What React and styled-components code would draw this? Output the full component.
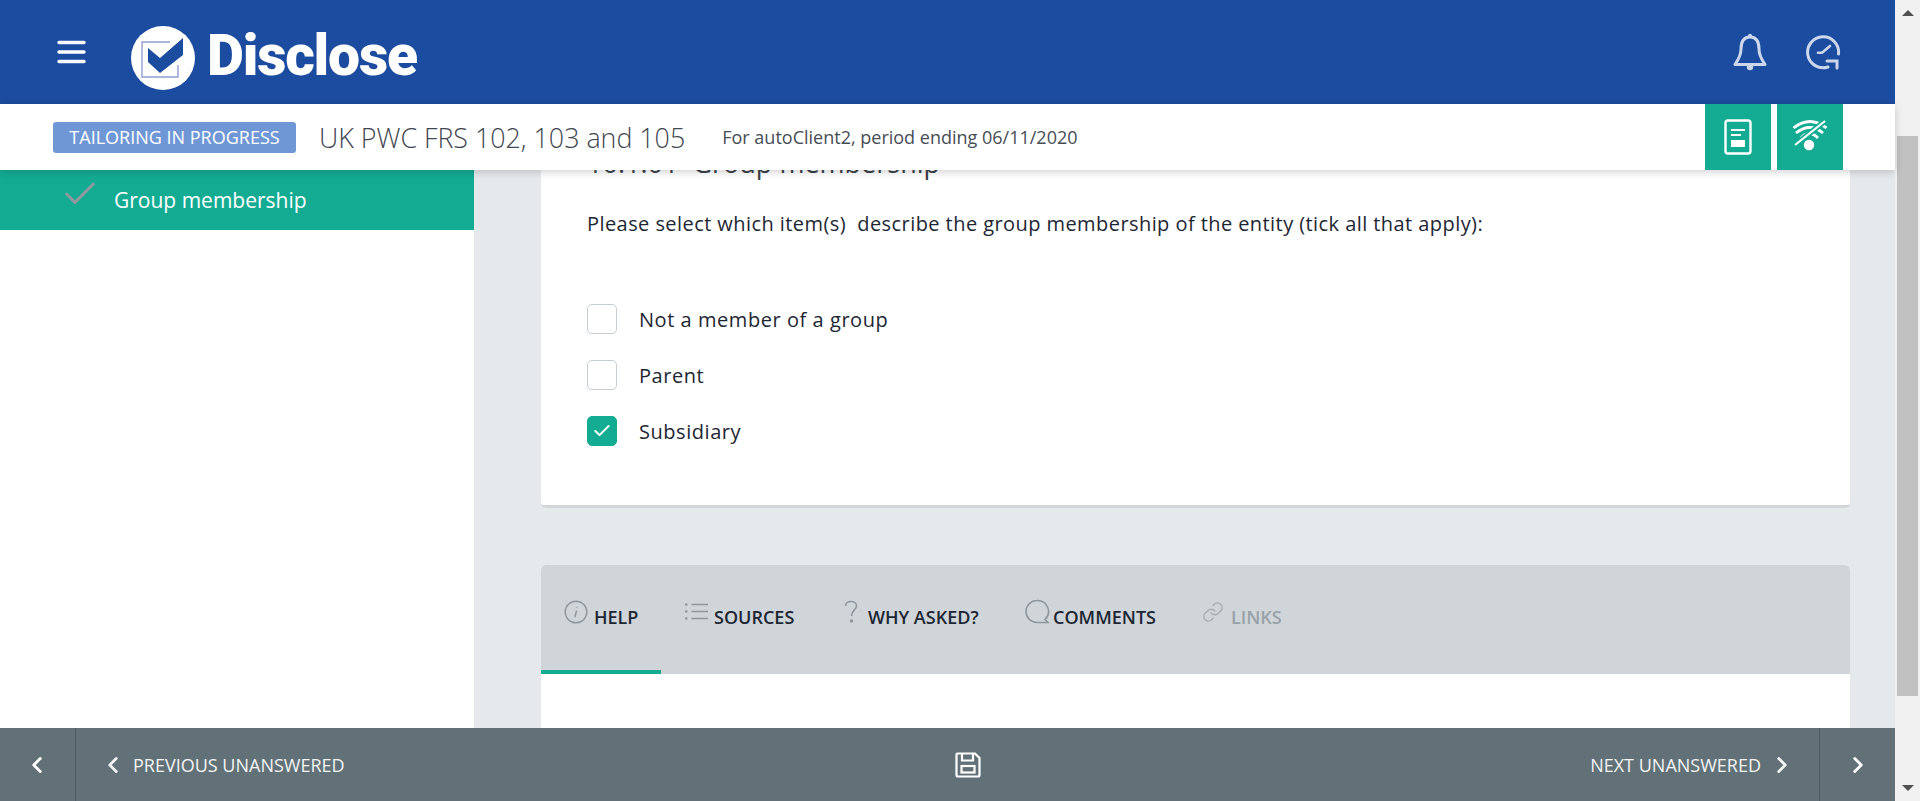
import React from "react";
import styled, { createGlobalStyle } from "styled-components";
import { ChevronLeft, ChevronRight, Check, Link } from "lucide-react";

const GlobalStyle = createGlobalStyle`
  html, body { margin: 0; height: 100%; overflow: hidden; }
  body { font-family: "Open Sans", sans-serif; color: #1d2733; }
  * { box-sizing: border-box; }
`;

const Page = styled.div`
  display: flex;
  height: 100vh;
  width: 100%;
`;

const Frame = styled.div`
  flex: 1;
  min-width: 0;
  display: flex;
  flex-direction: column;
`;

const ScrollBar = styled.div`
  width: 25px;
  background: #f1f1f1;
  display: flex;
  flex-direction: column;
  align-items: center;
`;

const ScrollArrow = styled.div`
  width: 0;
  height: 0;
  margin: ${(p) => (p.$down ? "auto 0 10px" : "10px 0 0")};
  border-left: 6px solid transparent;
  border-right: 6px solid transparent;
  ${(p) => (p.$down ? "border-top: 6px solid #505050;" : "border-bottom: 6px solid #505050;")}
`;

const ScrollThumb = styled.div`
  width: 21px;
  height: 560px;
  margin-top: 120px;
  background: #c1c1c1;
`;

const TopBar = styled.header`
  height: 104px;
  flex: none;
  background: #1c4c9f;
  display: flex;
  align-items: center;
  padding: 0 52px;
`;

const Burger = styled.button`
  border: 0;
  background: none;
  padding: 0;
  color: #fff;
  display: flex;
  margin-right: 41px;
`;

const Logo = styled.div`
  display: flex;
  align-items: center;
  gap: 12px;
  margin-top: 12px;
`;

const LogoName = styled.span`
  font-family: Roboto, sans-serif;
  font-weight: 900;
  font-size: 57px;
  letter-spacing: -1.2px;
  color: #fff;
  line-height: 1;
  margin-top: -6px;
`;

const TopIcons = styled.div`
  margin-left: auto;
  display: flex;
  align-items: center;
  gap: 38px;
  color: #ccd6ec;
  margin-right: 2px;
`;

const SubBar = styled.div`
  height: 66px;
  flex: none;
  background: #fff;
  display: flex;
  align-items: center;
  padding: 0 0 0 53px;
  position: relative;
  z-index: 2;
  box-shadow: 0 2px 8px rgba(0, 0, 0, 0.18);
`;

const StatusTag = styled.span`
  width: 243px;
  height: 31px;
  border-radius: 3px;
  background: #6f97d6;
  color: #fff;
  font-size: 18px;
  display: flex;
  align-items: center;
  justify-content: center;
`;

const DocTitle = styled.span`
  margin-left: 23px;
  font-size: 26.8px;
  font-weight: 300;
  color: #3f4750;
`;

const DocMeta = styled.span`
  margin-left: 37px;
  font-size: 18px;
  color: #454d55;
`;

const SubActions = styled.div`
  margin-left: auto;
  margin-right: 52px;
  display: flex;
  gap: 6px;
  height: 100%;
`;

const SquareButton = styled.button`
  width: 66px;
  border: 0;
  padding: 0;
  background: #14ab93;
  color: #fff;
  display: flex;
  align-items: center;
  justify-content: center;
`;

const Body = styled.div`
  flex: 1;
  min-height: 0;
  display: flex;
`;

const Sidebar = styled.aside`
  width: 474px;
  flex: none;
  background: #fff;
`;

const NavItem = styled.div`
  height: 60px;
  background: #14ab93;
  color: #fff;
  font-size: 21px;
  line-height: 62px;
  display: flex;
  align-items: center;
  padding-left: 60px;
  gap: 14px;
`;

const NavCheck = styled(Check)`
  color: #8f9aa0;
  margin-top: -12px;
`;

const Main = styled.main`
  flex: 1;
  min-width: 0;
  overflow: hidden;
  background: #e5e9ec;
  padding: 0 45px 0 67px;
`;

const Card = styled.section`
  margin-top: -48px;
  height: 386px;
  background: #fff;
  border-radius: 5px;
  border-bottom: 3px solid #d2d6da;
  padding: 24px 46px;
`;

const CardTitle = styled.h2`
  margin: 0;
  height: 34px;
  font-size: 27px;
  font-weight: 400;
  line-height: 34px;
  color: #3a424a;
`;

const Prompt = styled.p`
  margin: 31px 0 68px;
  font-size: 20px;
  letter-spacing: 0.43px;
  line-height: 25px;
`;

const Options = styled.div`
  display: flex;
  flex-direction: column;
  gap: 26px;
`;

const Option = styled.label`
  display: flex;
  align-items: center;
  gap: 22px;
  font-size: 20px;
  letter-spacing: 0.55px;
`;

const Tick = styled.span`
  width: 30px;
  height: 30px;
  border-radius: 5px;
  border: 1px solid ${(p) => (p.$on ? "#14ab93" : "#c5ccd2")};
  background: ${(p) => (p.$on ? "#14ab93" : "#fff")};
  color: #fff;
  display: flex;
  align-items: center;
  justify-content: center;
`;

const TabPanel = styled.section`
  margin-top: 57px;
  background: #fff;
  border-radius: 5px 5px 0 0;
  height: 300px;
  overflow: hidden;
`;

const TabBar = styled.nav`
  height: 109px;
  background: #d0d5d9;
  display: flex;
`;

const Tab = styled.div`
  height: 100%;
  width: ${(p) => p.$w}px;
  padding: 31px 0 0 ${(p) => p.$pad}px;
  display: flex;
  align-items: flex-start;
  gap: ${(p) => p.$gap || 6}px;
  font-size: 18px;
  font-weight: 600;
  line-height: 42px;
  color: ${(p) => (p.$off ? "#9aa2a9" : "#1d2733")};
  border-bottom: 4px solid ${(p) => (p.$active ? "#14ab93" : "transparent")};
`;

const TabIcon = styled.span`
  display: flex;
  color: #8e979e;
  opacity: ${(p) => (p.$off ? 0.6 : 1)};
  margin-top: ${(p) => p.$top || 0}px;
`;

const Footer = styled.footer`
  height: 73px;
  flex: none;
  background: #627177;
  color: #fff;
  display: flex;
  align-items: center;
  font-size: 18px;
`;

const EdgeButton = styled.div`
  width: 76px;
  height: 100%;
  flex: none;
  display: flex;
  align-items: center;
  justify-content: center;
  ${(p) => (p.$right ? "border-left" : "border-right")}: 1px solid #4f5d63;
  ${(p) => (p.$right ? "" : "padding-right: 2px;")}
`;

const StepButton = styled.div`
  display: flex;
  align-items: center;
  gap: 12px;
  color: #f2f4f5;
  ${(p) => (p.$right ? "padding-right: 24px;" : "padding-left: 24px;")}
`;

const PrevChevron = styled(ChevronLeft)`
  margin-right: -5px;
`;

const NextChevron = styled(ChevronRight)`
  margin-left: -4px;
`;

const FooterMiddle = styled.div`
  flex: 1;
  display: flex;
  justify-content: center;
  padding-left: 40px;
`;

const SideWrap = styled.div`
  width: 385px;
  display: flex;
  justify-content: ${(p) => (p.$right ? "flex-end" : "flex-start")};
`;

function BurgerIcon() {
  return (
    <svg width="38" height="38" viewBox="0 0 38 38" fill="none" stroke="currentColor" strokeWidth="3.4" strokeLinecap="round">
      <path d="M7 9.500h25M7 19h25M7 28.500h25" />
    </svg>
  );
}

function LogoMark() {
  return (
    <svg width="64" height="64" viewBox="0 0 64 64">
      <circle cx="32" cy="32" r="32" fill="#fff" />
      <path d="M39 16H11v35h36V39" fill="none" stroke="#8f9fd0" strokeWidth="1.4" />
      <path d="M17 22l12 10 23-20v17L29 47 17 36z" fill="#1c4c9f" />
    </svg>
  );
}

function BellIcon() {
  return (
    <svg width="34" height="38" viewBox="0 0 34 38" fill="none" stroke="currentColor" strokeWidth="3" strokeLinejoin="round">
      <path d="M17 4C9.500 4 8 10 8 16c0 7-3 11-6 15.500h30C29 27 26 23 26 16c0-6-1.500-12-9-12z" />
      <circle cx="17" cy="2.800" r="2" fill="currentColor" stroke="none" />
      <circle cx="17" cy="34" r="3.200" fill="currentColor" stroke="none" />
    </svg>
  );
}

function ClockIcon() {
  return (
    <svg width="36" height="36" viewBox="0 0 36 36" fill="none" stroke="currentColor" strokeWidth="3" strokeLinecap="round">
      <path d="M33.500 20A15.500 15.500 0 1 0 23 33" />
      <path d="M17 18.700L25 12M17 18.700h-4" strokeWidth="2.600" />
      <path d="M22 27h10v7" />
    </svg>
  );
}

function ReportIcon() {
  return (
    <svg width="28" height="36" viewBox="0 0 28 36" fill="none">
      <rect x="1.500" y="1.500" width="25" height="33" rx="2.500" stroke="#fff" strokeWidth="2.400" />
      <path d="M7 11h14M7 16h10" stroke="#fff" strokeWidth="2" />
      <rect x="7" y="21" width="14" height="7" fill="#fff" />
    </svg>
  );
}

function WifiOffIcon() {
  return (
    <svg width="36" height="36" viewBox="0 0 36 36" fill="none" stroke="#fff" strokeWidth="2.800">
      <path d="M1.500 9Q18-4 34.500 9" />
      <path d="M4 14q14-11 27 0" />
      <path d="M9 19q8-9 17 0" />
      <path d="M33 2L3 26" stroke="#14ab93" strokeWidth="5.500" />
      <path d="M33 2L3 26" strokeWidth="2.200" />
      <circle cx="17" cy="26" r="5.200" fill="#fff" stroke="none" />
    </svg>
  );
}

function InfoIcon() {
  return (
    <svg width="24" height="24" viewBox="0 0 24 24" fill="none" stroke="currentColor" strokeWidth="1.400">
      <circle cx="12" cy="12" r="10.800" />
      <path d="M12.600 10.500l-1.700 6.500M13 7v.800" strokeWidth="1.500" />
    </svg>
  );
}

function ListIcon() {
  return (
    <svg width="24" height="24" viewBox="0 0 24 24" fill="none" stroke="currentColor" strokeWidth="1.600">
      <path d="M7.500 4.500H24M7.500 11.500H24M7.500 18.500H24" />
      <path d="M1 4.500h2.500M1 11.500h2.500M1 18.500h2.500" strokeWidth="2.200" />
    </svg>
  );
}

function QuestionIcon() {
  return (
    <svg width="14" height="24" viewBox="0 0 14 24" fill="none" stroke="currentColor" strokeWidth="1.600">
      <path d="M1.500 6c0-6 11-6 11 0 0 4-5 4-5 10" />
      <circle cx="7.500" cy="21" r="1" fill="currentColor" />
    </svg>
  );
}

function BubbleIcon() {
  return (
    <svg width="26" height="26" viewBox="0 0 26 26" fill="none" stroke="currentColor" strokeWidth="1.600">
      <path d="M13 1.500a11 11 0 1 0 0 22h11l-3-3a11 11 0 0 0-8-19z" />
    </svg>
  );
}

function SaveIcon() {
  return (
    <svg width="26" height="26" viewBox="0 0 26 26" fill="none" stroke="#fff" strokeWidth="2.200">
      <path d="M2.500 1.500H20l4.500 4.500v17a1.500 1.500 0 0 1-1.500 1.500H3A1.500 1.500 0 0 1 1.500 23V2.500a1 1 0 0 1 1-1z" />
      <path d="M7 2v6.500h11V2" />
      <rect x="6.500" y="14" width="13" height="6.500" />
    </svg>
  );
}

export default function App() {
  return (
    <Page>
      <GlobalStyle />
      <Frame>
        <TopBar>
          <Burger aria-label="Menu"><BurgerIcon /></Burger>
          <Logo>
            <LogoMark />
            <LogoName>Disclose</LogoName>
          </Logo>
          <TopIcons>
            <BellIcon />
            <ClockIcon />
          </TopIcons>
        </TopBar>
        <SubBar>
          <StatusTag>TAILORING IN PROGRESS</StatusTag>
          <DocTitle>UK PWC FRS 102, 103 and 105</DocTitle>
          <DocMeta>For autoClient2, period ending 06/11/2020</DocMeta>
          <SubActions>
            <SquareButton aria-label="Report"><ReportIcon /></SquareButton>
            <SquareButton aria-label="Offline"><WifiOffIcon /></SquareButton>
          </SubActions>
        </SubBar>
        <Body>
          <Sidebar>
            <NavItem>
              <NavCheck size={40} strokeWidth={1.8} />
              Group membership
            </NavItem>
          </Sidebar>
          <Main>
            <Card>
              <CardTitle>10.1.01&nbsp; Group membership</CardTitle>
              <Prompt>Please select which item(s)&nbsp; describe the group membership of the entity (tick all that apply):</Prompt>
              <Options>
                <Option><Tick />Not a member of a group</Option>
                <Option><Tick />Parent</Option>
                <Option>
                  <Tick $on><Check size={20} strokeWidth={2.4} /></Tick>
                  Subsidiary
                </Option>
              </Options>
            </Card>
            <TabPanel>
              <TabBar>
                <Tab $w={120} $pad={23} $active>
                  <TabIcon $top={4}><InfoIcon /></TabIcon>HELP
                </Tab>
                <Tab $w={150} $pad={23}>
                  <TabIcon $top={4}><ListIcon /></TabIcon>SOURCES
                </Tab>
                <Tab $w={183} $pad={33} $gap={10}>
                  <TabIcon $top={4}><QuestionIcon /></TabIcon>WHY ASKED?
                </Tab>
                <Tab $w={180} $pad={30} $gap={3}>
                  <TabIcon $top={3}><BubbleIcon /></TabIcon>COMMENTS
                </Tab>
                <Tab $w={170} $pad={28} $gap={7} $off>
                  <TabIcon $off $top={5}><Link size={22} strokeWidth={1.6} /></TabIcon>LINKS
                </Tab>
              </TabBar>
            </TabPanel>
          </Main>
        </Body>
        <Footer>
          <EdgeButton><ChevronLeft size={26} strokeWidth={2.6} /></EdgeButton>
          <SideWrap>
            <StepButton>
              <PrevChevron size={26} strokeWidth={2.6} />
              PREVIOUS UNANSWERED
            </StepButton>
          </SideWrap>
          <FooterMiddle><SaveIcon /></FooterMiddle>
          <SideWrap $right>
            <StepButton $right>
              NEXT UNANSWERED
              <NextChevron size={26} strokeWidth={2.6} />
            </StepButton>
          </SideWrap>
          <EdgeButton $right><ChevronRight size={26} strokeWidth={2.6} /></EdgeButton>
        </Footer>
      </Frame>
      <ScrollBar>
        <ScrollArrow />
        <ScrollThumb />
        <ScrollArrow $down />
      </ScrollBar>
    </Page>
  );
}
